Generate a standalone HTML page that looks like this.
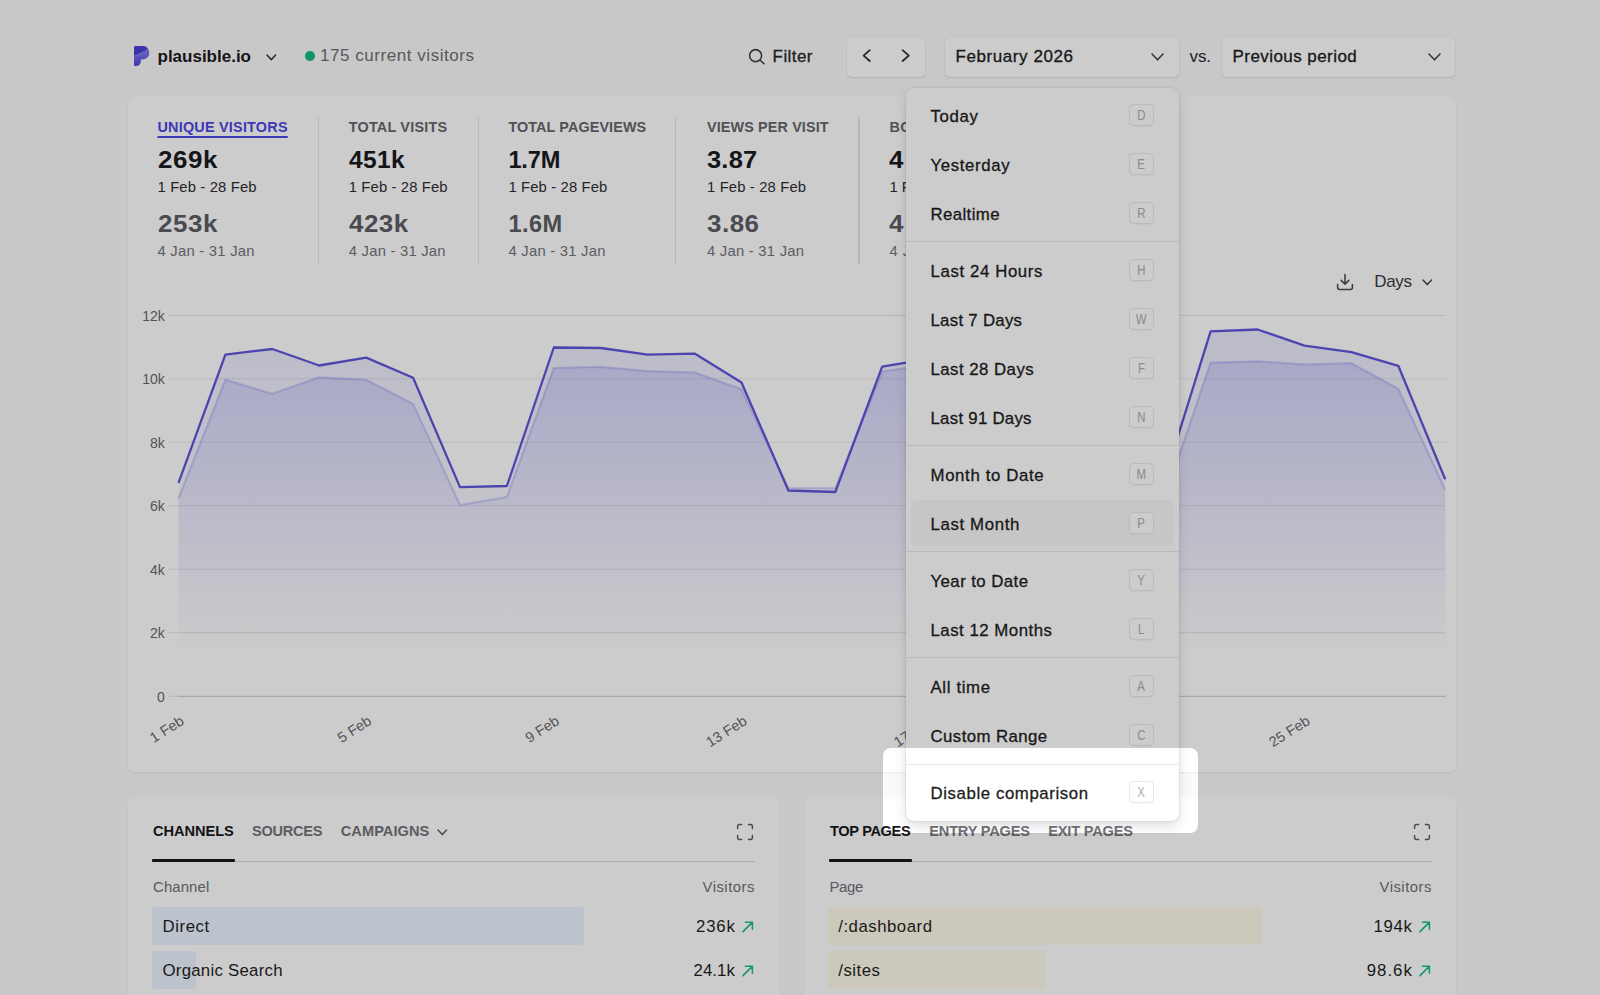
<!DOCTYPE html>
<html lang="en">
<head>
<meta charset="utf-8">
<title>Plausible Analytics &middot; plausible.io</title>
<style>
*{box-sizing:border-box;margin:0;padding:0}
html,body{width:1600px;height:995px;overflow:hidden}
body{background:#fafafa;font-family:"Liberation Sans",sans-serif;color:#171717;position:relative}
.a{position:absolute}
.t{position:absolute;white-space:nowrap;line-height:20px;height:20px;margin-top:-10px}
.card{position:absolute;background:#fff;border-radius:6px;box-shadow:0 1px 2px rgba(0,0,0,.07)}
.btn{position:absolute;background:#fff;border-radius:5px;box-shadow:0 1px 2px rgba(0,0,0,.10),0 0 0 1px rgba(0,0,0,.01)}
.vd{position:absolute;top:117px;height:147px;width:1.2px;background:#e6e6e9}
#dd{position:absolute;left:905.5px;top:87.5px;width:273.5px;height:733px;background:#fff;border-radius:8px;box-shadow:0 0 0 1px rgba(0,0,0,.035),0 6px 14px rgba(0,0,0,.10),0 2px 5px rgba(0,0,0,.06)}
.kb{position:absolute;left:1128.7px;width:25.6px;height:21.6px;margin-top:-11px;border:1px solid #e9e9ed;border-radius:4.5px;font-size:15px;line-height:19.8px;text-align:center;color:#adadb4;box-shadow:0 1px 1px rgba(0,0,0,.035);background:#fff}
.kb span{display:inline-block;transform:scaleX(.76)}
.sep{position:absolute;left:905.5px;width:273.5px;height:1px;background:#e9e9ec}
.bar{position:absolute;height:38.5px;border-radius:2.5px}
</style>
</head>
<body>

<!-- ===== header ===== -->
<svg class="a" style="left:134.4px;top:45.6px" width="15.6" height="20" viewBox="0 0 15.6 20">
<defs><clipPath id="pc"><path d="M0 1.8 C0 .8 .8 0 1.8 0 H8.2 C12.3 0 15.4 2.9 15.4 6.7 C15.4 10.5 12.3 13.4 8.4 13.4 H6.8 V15.4 C6.8 18 4.8 19.9 2.2 19.9 H1 C.4 19.9 0 19.5 0 18.9 Z"/></clipPath>
<linearGradient id="pg" x1="0" y1="0" x2="0" y2="1"><stop offset=".35" stop-color="#7b73f2"/><stop offset="1" stop-color="#5247dc"/></linearGradient></defs>
<g clip-path="url(#pc)"><rect width="15.6" height="20" fill="url(#pg)"/>
<path d="M-1 -1 H16 V1 L13.4 3 L12.4 4.2 L10.6 6.2 L9 5.8 L7.2 7.8 L5.6 7.4 L3.8 9.4 L2.2 9 L-1 11.6 Z" fill="#4a41d4"/>
<path d="M-.5 11.2 L2.2 9 L3.8 9.4 L5.6 7.4 L7.2 7.8 L9 5.8 L10.6 6.2 L13.6 2.8" fill="none" stroke="#a39df5" stroke-width=".9" stroke-linejoin="round"/></g>
</svg>
<div class="t" id="site" style="left:157.5px;top:56.5px;font-size:17px;color:#1b1b1f;font-weight:700;letter-spacing:-0.003px">plausible.io</div>
<svg class="a" style="left:264.7px;top:52.7px" width="12.6" height="8.6"><path d="M2 2 L6.30 6.60 L10.60 2" fill="none" stroke="#3f3f46" stroke-width="1.6" stroke-linecap="round" stroke-linejoin="round"/></svg>
<div class="a" style="left:305px;top:50.6px;width:10.4px;height:10.4px;border-radius:50%;background:#12b886"></div>
<div class="t" id="cur" style="left:320px;top:56px;font-size:17px;color:#6e6e76;letter-spacing:0.546px">175 current visitors</div>
<svg class="a" style="left:747px;top:47px" width="20" height="20" viewBox="0 0 20 20"><circle cx="8.6" cy="8.6" r="6" fill="none" stroke="#3f3f46" stroke-width="1.55"/><path d="M13 13 L17 16.8" stroke="#3f3f46" stroke-width="1.55" stroke-linecap="round"/></svg>
<div class="t" id="filter" style="left:772.6px;top:57px;font-size:17px;color:#27272a;letter-spacing:0.424px;-webkit-text-stroke:0.3px #27272a">Filter</div>
<div class="btn" style="left:846.8px;top:37px;width:78.2px;height:40px"></div>
<svg class="a" style="left:860px;top:48px" width="14" height="15" viewBox="0 0 14 15"><path d="M9.8 2.2 L3.6 7.6 L9.8 13" fill="none" stroke="#2c2c30" stroke-width="1.7" stroke-linecap="round" stroke-linejoin="round"/></svg>
<svg class="a" style="left:899px;top:48px" width="14" height="15" viewBox="0 0 14 15"><path d="M3.6 2.2 L9.8 7.6 L3.6 13" fill="none" stroke="#2c2c30" stroke-width="1.7" stroke-linecap="round" stroke-linejoin="round"/></svg>
<div class="btn" style="left:945px;top:37px;width:233.6px;height:40px"></div>
<div class="t" id="feb" style="left:955.5px;top:57px;font-size:17px;color:#1c1c1f;letter-spacing:0.577px;-webkit-text-stroke:0.3px #1c1c1f">February 2026</div>
<svg class="a" style="left:1149.5px;top:51.9px" width="15.0" height="9.8"><path d="M2 2 L7.50 7.80 L13.00 2" fill="none" stroke="#46464d" stroke-width="1.6" stroke-linecap="round" stroke-linejoin="round"/></svg>
<div class="t" id="vs" style="left:1189.5px;top:57px;font-size:17px;color:#2c2c30;letter-spacing:-0.117px">vs.</div>
<div class="btn" style="left:1222.3px;top:37px;width:233px;height:40px"></div>
<div class="t" id="prev" style="left:1232.5px;top:57px;font-size:17px;color:#1c1c1f;letter-spacing:0.438px;-webkit-text-stroke:0.3px #1c1c1f">Previous period</div>
<svg class="a" style="left:1427.1px;top:51.9px" width="15.0" height="9.8"><path d="M2 2 L7.50 7.80 L13.00 2" fill="none" stroke="#46464d" stroke-width="1.6" stroke-linecap="round" stroke-linejoin="round"/></svg>

<!-- ===== main card ===== -->
<div class="card" style="left:128px;top:97px;width:1327.5px;height:675px"></div>
<div class="t" id="l0" style="left:157.5px;top:127px;font-size:14.4px;color:#4f46e5;font-weight:700;letter-spacing:0.223px;text-decoration:underline;text-decoration-thickness:1.6px;text-underline-offset:3.5px">UNIQUE VISITORS</div>
<div class="t" id="v0" style="left:157.5px;top:160.2px;font-size:23.6px;color:#1b1b1f;font-weight:700;letter-spacing:0.530px;transform:scaleX(1.1);transform-origin:0 50%">269k</div>
<div class="t" id="d0" style="left:157.5px;top:186.6px;font-size:14.8px;color:#2e2e33;letter-spacing:0.149px">1 Feb - 28 Feb</div>
<div class="t" id="w0" style="left:157.5px;top:224px;font-size:23.6px;color:#5d5d64;font-weight:700;letter-spacing:0.530px;transform:scaleX(1.1);transform-origin:0 50%">253k</div>
<div class="t" id="e0" style="left:157.5px;top:251px;font-size:14.8px;color:#74747b;letter-spacing:0.248px">4 Jan - 31 Jan</div>
<div class="t" id="l1" style="left:348.75px;top:127px;font-size:14.4px;color:#66666c;font-weight:700;letter-spacing:0.209px">TOTAL VISITS</div>
<div class="t" id="v1" style="left:348.75px;top:160.2px;font-size:23.6px;color:#1b1b1f;font-weight:700;letter-spacing:0.369px;transform:scaleX(1.04);transform-origin:0 50%">451k</div>
<div class="t" id="d1" style="left:348.75px;top:186.6px;font-size:14.8px;color:#2e2e33;letter-spacing:0.130px">1 Feb - 28 Feb</div>
<div class="t" id="w1" style="left:348.75px;top:224px;font-size:23.6px;color:#5d5d64;font-weight:700;letter-spacing:0.455px;transform:scaleX(1.1);transform-origin:0 50%">423k</div>
<div class="t" id="e1" style="left:348.75px;top:251px;font-size:14.8px;color:#74747b;letter-spacing:0.228px">4 Jan - 31 Jan</div>
<div class="t" id="l2" style="left:508.4px;top:127px;font-size:14.4px;color:#66666c;font-weight:700;letter-spacing:0.095px">TOTAL PAGEVIEWS</div>
<div class="t" id="v2" style="left:508.4px;top:160.2px;font-size:23.6px;color:#1b1b1f;font-weight:700;letter-spacing:-0.184px;transform:scaleX(1.0);transform-origin:0 50%">1.7M</div>
<div class="t" id="d2" style="left:508.4px;top:186.6px;font-size:14.8px;color:#2e2e33;letter-spacing:0.141px">1 Feb - 28 Feb</div>
<div class="t" id="w2" style="left:508.4px;top:224px;font-size:23.6px;color:#5d5d64;font-weight:700;letter-spacing:0.449px;transform:scaleX(1.0);transform-origin:0 50%">1.6M</div>
<div class="t" id="e2" style="left:508.4px;top:251px;font-size:14.8px;color:#74747b;letter-spacing:0.255px">4 Jan - 31 Jan</div>
<div class="t" id="l3" style="left:707px;top:127px;font-size:14.4px;color:#66666c;font-weight:700;letter-spacing:0.118px">VIEWS PER VISIT</div>
<div class="t" id="v3" style="left:707px;top:160.2px;font-size:23.6px;color:#1b1b1f;font-weight:700;letter-spacing:0.187px;transform:scaleX(1.08);transform-origin:0 50%">3.87</div>
<div class="t" id="d3" style="left:707px;top:186.6px;font-size:14.8px;color:#2e2e33;letter-spacing:0.149px">1 Feb - 28 Feb</div>
<div class="t" id="w3" style="left:707px;top:224px;font-size:23.6px;color:#5d5d64;font-weight:700;letter-spacing:0.450px;transform:scaleX(1.1);transform-origin:0 50%">3.86</div>
<div class="t" id="e3" style="left:707px;top:251px;font-size:14.8px;color:#74747b;letter-spacing:0.248px">4 Jan - 31 Jan</div>
<div class="t" id="l4" style="left:889.5px;top:127px;font-size:14.4px;color:#66666c;font-weight:700;letter-spacing:.3px">BOUNCE RATE</div>
<div class="t" id="v4" style="left:889px;top:160.2px;font-size:23.6px;color:#1b1b1f;font-weight:700;letter-spacing:3px;transform:scaleX(1.1);transform-origin:0 50%">47%</div>
<div class="t" id="d4" style="left:889.5px;top:186.6px;font-size:14.8px;color:#2e2e33;letter-spacing:-.1px">1 Feb - 28 Feb</div>
<div class="t" id="w4" style="left:889px;top:224px;font-size:23.6px;color:#5d5d64;font-weight:700;letter-spacing:3px;transform:scaleX(1.1);transform-origin:0 50%">46%</div>
<div class="t" id="e4" style="left:889.5px;top:251px;font-size:14.8px;color:#74747b;letter-spacing:.4px">4 Jan - 31 Jan</div>
<div class="vd" style="left:317.6px"></div>
<div class="vd" style="left:477.6px"></div>
<div class="vd" style="left:675.3px"></div>
<div class="vd" style="left:858.4px"></div>

<!-- ===== chart ===== -->
<svg class="a" id="chart" style="left:0;top:0" width="1600" height="995" viewBox="0 0 1600 995">
<defs>
<linearGradient id="gm" gradientUnits="userSpaceOnUse" x1="0" y1="275" x2="0" y2="652"><stop offset="0" stop-color="rgb(86,82,232)" stop-opacity=".135"/><stop offset="1" stop-color="rgb(86,82,232)" stop-opacity="0"/></linearGradient>
<linearGradient id="gc" gradientUnits="userSpaceOnUse" x1="0" y1="275" x2="0" y2="652"><stop offset="0" stop-color="rgb(86,82,232)" stop-opacity=".22"/><stop offset="1" stop-color="rgb(86,82,232)" stop-opacity="0"/></linearGradient>
</defs>
<line x1="168" x2="1446" y1="315.4" y2="315.4" stroke="#eaeaed" stroke-width="1.1"/><line x1="168" x2="1446" y1="378.8" y2="378.8" stroke="#eaeaed" stroke-width="1.1"/><line x1="168" x2="1446" y1="442.3" y2="442.3" stroke="#eaeaed" stroke-width="1.1"/><line x1="168" x2="1446" y1="505.8" y2="505.8" stroke="#eaeaed" stroke-width="1.1"/><line x1="168" x2="1446" y1="569.2" y2="569.2" stroke="#eaeaed" stroke-width="1.1"/><line x1="168" x2="1446" y1="632.6" y2="632.6" stroke="#eaeaed" stroke-width="1.1"/><line x1="168" x2="178" y1="696.3" y2="696.3" stroke="#e7e7ea" stroke-width="1.1"/><line x1="178" x2="1446" y1="696.3" y2="696.3" stroke="#d2d2d6" stroke-width="1.2"/>
<path d="M178.5 498.5 L225.4 379.8 L272.3 393.8 L319.2 377.3 L366.2 379.8 L413.1 403.9 L460.0 505.2 L506.9 497.1 L553.8 368.0 L600.7 366.8 L647.6 371.1 L694.6 372.4 L741.5 389.3 L788.4 488.0 L835.3 488.2 L882.2 371.5 L929.1 364.5 L976.1 361.0 L1023.0 365.0 L1069.9 390.0 L1116.8 497.0 L1163.7 501.0 L1210.6 362.6 L1257.5 361.3 L1304.5 364.4 L1351.4 363.2 L1398.3 388.8 L1445.2 489.8 L1445.2 696 L178.5 696 Z" fill="url(#gc)"/>
<path d="M178.5 482.9 L225.4 354.6 L272.3 349.0 L319.2 365.5 L366.2 357.6 L413.1 377.8 L460.0 487.1 L506.9 486.0 L553.8 347.5 L600.7 348.0 L647.6 354.6 L694.6 353.6 L741.5 382.5 L788.4 490.5 L835.3 492.0 L882.2 366.7 L929.1 358.8 L976.1 352.5 L1023.0 355.5 L1069.9 379.0 L1116.8 489.0 L1163.7 482.0 L1210.6 331.3 L1257.5 329.5 L1304.5 345.7 L1351.4 352.1 L1398.3 365.8 L1445.2 479.2 L1445.2 696 L178.5 696 Z" fill="url(#gm)"/>
<path d="M178.5 498.5 L225.4 379.8 L272.3 393.8 L319.2 377.3 L366.2 379.8 L413.1 403.9 L460.0 505.2 L506.9 497.1 L553.8 368.0 L600.7 366.8 L647.6 371.1 L694.6 372.4 L741.5 389.3 L788.4 488.0 L835.3 488.2 L882.2 371.5 L929.1 364.5 L976.1 361.0 L1023.0 365.0 L1069.9 390.0 L1116.8 497.0 L1163.7 501.0 L1210.6 362.6 L1257.5 361.3 L1304.5 364.4 L1351.4 363.2 L1398.3 388.8 L1445.2 489.8" fill="none" stroke="rgba(79,70,229,.2)" stroke-width="2.2" stroke-linejoin="round"/>
<path d="M178.5 482.9 L225.4 354.6 L272.3 349.0 L319.2 365.5 L366.2 357.6 L413.1 377.8 L460.0 487.1 L506.9 486.0 L553.8 347.5 L600.7 348.0 L647.6 354.6 L694.6 353.6 L741.5 382.5 L788.4 490.5 L835.3 492.0 L882.2 366.7 L929.1 358.8 L976.1 352.5 L1023.0 355.5 L1069.9 379.0 L1116.8 489.0 L1163.7 482.0 L1210.6 331.3 L1257.5 329.5 L1304.5 345.7 L1351.4 352.1 L1398.3 365.8 L1445.2 479.2" fill="none" stroke="#6057dc" stroke-width="2.3" stroke-linejoin="round"/>
<g font-family="Liberation Sans, sans-serif" font-size="14" fill="#69696e"><text x="164.8" y="320.8" text-anchor="end">12k</text><text x="164.8" y="384.2" text-anchor="end">10k</text><text x="164.8" y="447.7" text-anchor="end">8k</text><text x="164.8" y="511.1" text-anchor="end">6k</text><text x="164.8" y="574.6" text-anchor="end">4k</text><text x="164.8" y="638.0" text-anchor="end">2k</text><text x="164.8" y="701.5" text-anchor="end">0</text><text transform="translate(184.9 723.4) rotate(-32.5)" text-anchor="end" font-size="14.4">1 Feb</text><text transform="translate(372.6 723.4) rotate(-32.5)" text-anchor="end" font-size="14.4">5 Feb</text><text transform="translate(560.2 723.4) rotate(-32.5)" text-anchor="end" font-size="14.4">9 Feb</text><text transform="translate(747.9 723.4) rotate(-32.5)" text-anchor="end" font-size="14.4">13 Feb</text><text transform="translate(935.5 723.4) rotate(-32.5)" text-anchor="end" font-size="14.4">17 Feb</text><text transform="translate(1123.2 723.4) rotate(-32.5)" text-anchor="end" font-size="14.4">21 Feb</text><text transform="translate(1310.9 723.4) rotate(-32.5)" text-anchor="end" font-size="14.4">25 Feb</text></g>
</svg>
<svg class="a" style="left:1335px;top:272px" width="20" height="20" viewBox="0 0 20 20"><path d="M10 2.6 V12 M6.2 8.4 L10 12.2 L13.8 8.4 M2.6 12.6 V15.4 C2.6 16.5 3.5 17.4 4.6 17.4 H15.4 C16.5 17.4 17.4 16.5 17.4 15.4 V12.6" fill="none" stroke="#48484f" stroke-width="1.5" stroke-linecap="round" stroke-linejoin="round"/></svg>
<div class="t" id="days" style="left:1374.2px;top:282px;font-size:17px;color:#3a3a40;letter-spacing:-0.311px">Days</div>
<svg class="a" style="left:1420.7px;top:277.9px" width="12.6" height="8.6"><path d="M2 2 L6.30 6.60 L10.60 2" fill="none" stroke="#46464d" stroke-width="1.5" stroke-linecap="round" stroke-linejoin="round"/></svg>

<!-- ===== bottom cards ===== -->
<div class="card" style="left:128px;top:797.4px;width:651.5px;height:260px"></div>
<div class="t" id="t1" style="left:153px;top:831px;font-size:14.6px;color:#18181b;font-weight:700;letter-spacing:-0.047px">CHANNELS</div>
<div class="t" id="t2" style="left:252px;top:831px;font-size:14.6px;color:#74747b;font-weight:700;letter-spacing:-0.279px">SOURCES</div>
<div class="t" id="t3" style="left:340.75px;top:831px;font-size:14.6px;color:#74747b;font-weight:700;letter-spacing:0.049px">CAMPAIGNS</div>
<svg class="a" style="left:435.9px;top:827.5px" width="12.6" height="8.6"><path d="M2 2 L6.30 6.60 L10.60 2" fill="none" stroke="#5d5d64" stroke-width="1.5" stroke-linecap="round" stroke-linejoin="round"/></svg>
<svg class="a" style="left:736.2px;top:822.8px" width="18" height="18" viewBox="0 0 18 18"><path d="M1.6 5.6 V3.6 C1.6 2.5 2.5 1.6 3.6 1.6 H5.6 M12.4 1.6 H14.4 C15.5 1.6 16.4 2.5 16.4 3.6 V5.6 M16.4 12.4 V14.4 C16.4 15.5 15.5 16.4 14.4 16.4 H12.4 M5.6 16.4 H3.6 C2.5 16.4 1.6 15.5 1.6 14.4 V12.4" fill="none" stroke="#5f5f66" stroke-width="1.5" stroke-linecap="round"/></svg>
<div class="a" style="left:152px;top:860.7px;width:603px;height:1.2px;background:#d9d9dd"></div>
<div class="a" style="left:152px;top:859.2px;width:82.5px;height:3.2px;border-radius:1px;background:#18181b"></div>
<div class="t" id="h1" style="left:153px;top:887.3px;font-size:14.9px;color:#707078;letter-spacing:0.128px">Channel</div>
<div class="t" id="h2" style="left:702.5px;top:887.3px;font-size:14.9px;color:#707078;letter-spacing:0.477px">Visitors</div>
<div class="bar" style="left:152px;top:906.5px;width:432px;background:#ecf4ff"></div>
<div class="bar" style="left:152px;top:950.5px;width:44.3px;background:#ecf4ff"></div>
<div class="t" id="r1" style="left:162.5px;top:927.1px;font-size:16.8px;color:#1f1f23;letter-spacing:0.584px">Direct</div>
<div class="t" id="r2" style="left:162.5px;top:971.1px;font-size:16.8px;color:#1f1f23;letter-spacing:0.262px">Organic Search</div>
<div class="t" id="n1" style="left:696px;top:927.1px;font-size:16.8px;color:#1f1f23;letter-spacing:0.803px">236k</div>
<div class="t" id="n2" style="left:693.5px;top:971.1px;font-size:16.8px;color:#1f1f23;letter-spacing:0.059px">24.1k</div>
<svg class="a" style="left:741px;top:919.8px" width="14" height="14" viewBox="0 0 14 14"><path d="M2 11.6 L11.2 2.4 M4.4 2.2 H11.4 V9.2" fill="none" stroke="#1dbb8b" stroke-width="1.55" stroke-linecap="round" stroke-linejoin="round"/></svg>
<svg class="a" style="left:741px;top:963.8px" width="14" height="14" viewBox="0 0 14 14"><path d="M2 11.6 L11.2 2.4 M4.4 2.2 H11.4 V9.2" fill="none" stroke="#1dbb8b" stroke-width="1.55" stroke-linecap="round" stroke-linejoin="round"/></svg>

<div class="card" style="left:804px;top:797.4px;width:651.5px;height:260px"></div>
<div class="t" id="t4" style="left:830px;top:831px;font-size:14.6px;color:#18181b;font-weight:700;letter-spacing:-0.350px">TOP PAGES</div>
<div class="t" id="t5" style="left:929.25px;top:831px;font-size:14.6px;color:#74747b;font-weight:700;letter-spacing:-0.197px">ENTRY PAGES</div>
<div class="t" id="t6" style="left:1048.25px;top:831px;font-size:14.6px;color:#74747b;font-weight:700;letter-spacing:-0.196px">EXIT PAGES</div>
<svg class="a" style="left:1413px;top:822.8px" width="18" height="18" viewBox="0 0 18 18"><path d="M1.6 5.6 V3.6 C1.6 2.5 2.5 1.6 3.6 1.6 H5.6 M12.4 1.6 H14.4 C15.5 1.6 16.4 2.5 16.4 3.6 V5.6 M16.4 12.4 V14.4 C16.4 15.5 15.5 16.4 14.4 16.4 H12.4 M5.6 16.4 H3.6 C2.5 16.4 1.6 15.5 1.6 14.4 V12.4" fill="none" stroke="#5f5f66" stroke-width="1.5" stroke-linecap="round"/></svg>
<div class="a" style="left:829px;top:860.7px;width:603px;height:1.2px;background:#d9d9dd"></div>
<div class="a" style="left:828.8px;top:859.2px;width:83px;height:3.2px;border-radius:1px;background:#18181b"></div>
<div class="t" id="h3" style="left:829.5px;top:887.3px;font-size:14.9px;color:#707078;letter-spacing:-0.344px">Page</div>
<div class="t" id="h4" style="left:1379.5px;top:887.3px;font-size:14.9px;color:#707078;letter-spacing:0.477px">Visitors</div>
<div class="bar" style="left:828.3px;top:906.5px;width:433.5px;background:#fffaea"></div>
<div class="bar" style="left:828.3px;top:950.5px;width:216.5px;background:#fffaea"></div>
<div class="t" id="r3" style="left:838.25px;top:927.1px;font-size:16.8px;color:#1f1f23;letter-spacing:0.511px">/:dashboard</div>
<div class="t" id="r4" style="left:838.25px;top:971.1px;font-size:16.8px;color:#1f1f23;letter-spacing:0.516px">/sites</div>
<div class="t" id="n3" style="left:1373.6px;top:927.1px;font-size:16.8px;color:#1f1f23;letter-spacing:0.603px">194k</div>
<div class="t" id="n4" style="left:1366.8px;top:971.1px;font-size:16.8px;color:#1f1f23;letter-spacing:0.984px">98.6k</div>
<svg class="a" style="left:1418px;top:919.8px" width="14" height="14" viewBox="0 0 14 14"><path d="M2 11.6 L11.2 2.4 M4.4 2.2 H11.4 V9.2" fill="none" stroke="#1dbb8b" stroke-width="1.55" stroke-linecap="round" stroke-linejoin="round"/></svg>
<svg class="a" style="left:1418px;top:963.8px" width="14" height="14" viewBox="0 0 14 14"><path d="M2 11.6 L11.2 2.4 M4.4 2.2 H11.4 V9.2" fill="none" stroke="#1dbb8b" stroke-width="1.55" stroke-linecap="round" stroke-linejoin="round"/></svg>

<!-- ===== period dropdown ===== -->
<div id="dd"></div>
<div class="a" style="left:910.6px;top:500.2px;width:263px;height:45.6px;border-radius:6px;background:#f8f8f9"></div>
<div class="sep" style="top:241.0px"></div>
<div class="sep" style="top:445.0px"></div>
<div class="sep" style="top:551.0px"></div>
<div class="sep" style="top:657.0px"></div>
<div class="sep" style="top:764.0px"></div>
<div class="t" id="i0" style="left:930.5px;top:117.3px;font-size:16.8px;color:#1d1d21;letter-spacing:0.630px;-webkit-text-stroke:0.3px #1d1d21">Today</div><div class="kb" style="top:115.3px"><span>D</span></div>
<div class="t" id="i1" style="left:930.5px;top:166.3px;font-size:16.8px;color:#1d1d21;letter-spacing:0.636px;-webkit-text-stroke:0.3px #1d1d21">Yesterday</div><div class="kb" style="top:164.3px"><span>E</span></div>
<div class="t" id="i2" style="left:930.5px;top:215.3px;font-size:16.8px;color:#1d1d21;letter-spacing:0.397px;-webkit-text-stroke:0.3px #1d1d21">Realtime</div><div class="kb" style="top:213.3px"><span>R</span></div>
<div class="t" id="i3" style="left:930.5px;top:272.3px;font-size:16.8px;color:#1d1d21;letter-spacing:0.618px;-webkit-text-stroke:0.3px #1d1d21">Last 24 Hours</div><div class="kb" style="top:270.3px"><span>H</span></div>
<div class="t" id="i4" style="left:930.5px;top:321.2px;font-size:16.8px;color:#1d1d21;letter-spacing:0.287px;-webkit-text-stroke:0.3px #1d1d21">Last 7 Days</div><div class="kb" style="top:319.2px"><span>W</span></div>
<div class="t" id="i5" style="left:930.5px;top:370.2px;font-size:16.8px;color:#1d1d21;letter-spacing:0.477px;-webkit-text-stroke:0.3px #1d1d21">Last 28 Days</div><div class="kb" style="top:368.2px"><span>F</span></div>
<div class="t" id="i6" style="left:930.5px;top:419.2px;font-size:16.8px;color:#1d1d21;letter-spacing:0.277px;-webkit-text-stroke:0.3px #1d1d21">Last 91 Days</div><div class="kb" style="top:417.2px"><span>N</span></div>
<div class="t" id="i7" style="left:930.5px;top:476.2px;font-size:16.8px;color:#1d1d21;letter-spacing:0.648px;-webkit-text-stroke:0.3px #1d1d21">Month to Date</div><div class="kb" style="top:474.2px"><span>M</span></div>
<div class="t" id="i8" style="left:930.5px;top:525.2px;font-size:16.8px;color:#1d1d21;letter-spacing:0.641px;-webkit-text-stroke:0.3px #1d1d21">Last Month</div><div class="kb" style="top:523.2px"><span>P</span></div>
<div class="t" id="i9" style="left:930.5px;top:582.2px;font-size:16.8px;color:#1d1d21;letter-spacing:0.438px;-webkit-text-stroke:0.3px #1d1d21">Year to Date</div><div class="kb" style="top:580.2px"><span>Y</span></div>
<div class="t" id="i10" style="left:930.5px;top:631.2px;font-size:16.8px;color:#1d1d21;letter-spacing:0.519px;-webkit-text-stroke:0.3px #1d1d21">Last 12 Months</div><div class="kb" style="top:629.2px"><span>L</span></div>
<div class="t" id="i11" style="left:930.5px;top:688.2px;font-size:16.8px;color:#1d1d21;letter-spacing:0.641px;-webkit-text-stroke:0.3px #1d1d21">All time</div><div class="kb" style="top:686.2px"><span>A</span></div>
<div class="t" id="i12" style="left:930.5px;top:737.2px;font-size:16.8px;color:#1d1d21;letter-spacing:0.433px;-webkit-text-stroke:0.3px #1d1d21">Custom Range</div><div class="kb" style="top:735.2px"><span>C</span></div>
<div class="t" id="i13" style="left:930.5px;top:794.3px;font-size:16.8px;color:#1d1d21;letter-spacing:0.596px;-webkit-text-stroke:0.3px #1d1d21">Disable comparison</div><div class="kb" style="top:792.3px"><span>X</span></div>

<!-- ===== tour overlay with spotlight cut-out ===== -->
<div class="a" id="spot" style="left:883.2px;top:747.8px;width:315px;height:85.2px;border-radius:8px;box-shadow:0 0 0 3000px rgba(0,0,0,.2)"></div>
</body>
</html>
